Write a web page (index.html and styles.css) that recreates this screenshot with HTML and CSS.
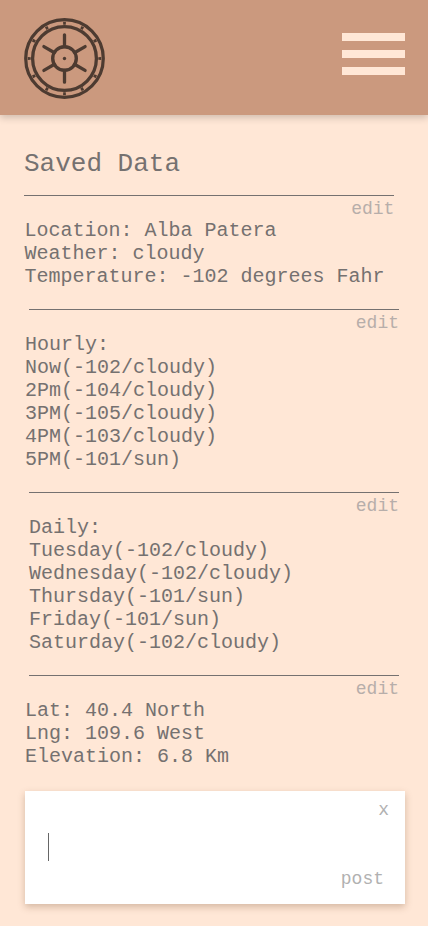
FILE: index.html
```html
<!DOCTYPE html>
<html lang="en">
<head>
<meta charset="utf-8">
<title>Saved Data</title>
<link rel="stylesheet" href="styles.css">
</head>
<body>
<header class="header">
  <svg class="logo" viewBox="-41.5 -41.5 83 83" fill="none" stroke="#4d3b31">
    <circle r="38.8" stroke-width="3.2"/>
    <circle r="31.9" stroke-width="3.3"/>
    <circle r="11.8" stroke-width="3.4"/>
    <path stroke-width="3.3" stroke-linecap="round" d="M0-12V-23.7M0 12V23.7M10.4-6L20.6-11.9M10.4 6L20.6 11.9M-10.4-6L-20.6-11.9M-10.4 6L-20.6 11.9"/>
    <circle r="35.3" stroke-width="3" pathLength="120" stroke-dasharray="1.5 8.5" stroke-dashoffset=".75"/>
    <circle r="1.7" fill="#4d3b31" stroke="none"/>
  </svg>
  <div class="menu"><span></span><span></span><span></span></div>
</header>
<main class="content">
  <h1 class="title">Saved Data</h1>
  <section class="entry entry-first">
    <div class="edit">edit</div>
    <p class="lines">Location: Alba Patera<br>Weather: cloudy<br>Temperature: -102 degrees Fahr</p>
  </section>
  <section class="entry">
    <div class="edit">edit</div>
    <p class="lines outdent">Hourly:<br>Now(-102/cloudy)<br>2Pm(-104/cloudy)<br>3PM(-105/cloudy)<br>4PM(-103/cloudy)<br>5PM(-101/sun)</p>
  </section>
  <section class="entry">
    <div class="edit">edit</div>
    <p class="lines">Daily:<br>Tuesday(-102/cloudy)<br>Wednesday(-102/cloudy)<br>Thursday(-101/sun)<br>Friday(-101/sun)<br>Saturday(-102/cloudy)</p>
  </section>
  <section class="entry">
    <div class="edit">edit</div>
    <p class="lines outdent">Lat: 40.4 North<br>Lng: 109.6 West<br>Elevation: 6.8 Km</p>
  </section>
  <div class="composer">
    <div class="close">x</div>
    <div class="caret"></div>
    <div class="post">post</div>
  </div>
</main>
</body>
</html>
```
FILE: styles.css
```css
* { box-sizing: border-box; }
body {
  margin: 0;
  height: 926px;
  overflow: hidden;
  background: #ffe7d6;
  color: #757170;
  font-family: "Liberation Mono", monospace;
}
.header {
  height: 115px;
  padding: 17px 23px 0;
  display: flex;
  justify-content: space-between;
  background: #cb997e;
  box-shadow: 0 3px 7px rgba(0, 0, 0, .18);
}
.logo { width: 83px; height: 83px; }
.menu {
  width: 63px;
  padding-top: 16px;
  display: flex;
  flex-direction: column;
  gap: 9px;
}
.menu span { height: 8px; background: #ffe7d6; }
.content { padding: 32px 23px 0 24px; }
.title {
  margin: 0;
  height: 48px;
  font-size: 26px;
  line-height: 34px;
  font-weight: 400;
}
.entry {
  width: 370px;
  margin-left: 5px;
  margin-bottom: 21px;
  border-top: 1px solid #757170;
}
.entry-first { margin-left: .4px; }
.edit {
  height: 23px;
  padding-top: 3px;
  font-size: 18px;
  line-height: 20px;
  text-align: right;
  color: #b7aeaa;
}
.lines {
  margin: 0;
  font-size: 20px;
  line-height: 23px;
  white-space: nowrap;
}
.outdent { margin-left: -4px; }
.composer {
  width: 380px;
  height: 113px;
  margin: 23px 0 0 1px;
  padding: 9px 16px 0 23px;
  background: #fff;
  box-shadow: 0 3px 7px rgba(100, 60, 30, .28);
  font-size: 18px;
  line-height: 20px;
  color: #b1b1b1;
}
.close { height: 33px; text-align: right; }
.caret { width: 1px; height: 28px; background: #666; }
.post { margin-top: 8px; padding-right: 5px; text-align: right; }
```
